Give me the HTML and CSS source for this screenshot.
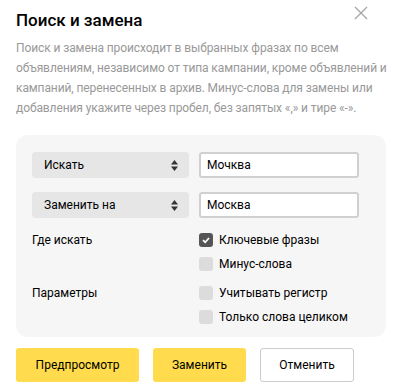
FILE: index.html
```html
<!DOCTYPE html>
<html lang="ru">
<head>
<meta charset="utf-8">
<link rel="stylesheet" href="styles.css">
</head>
<body>
<div class="dialog">
  <div class="head">
    <h1 class="title">Поиск и замена</h1>
    <button class="close" aria-label="Закрыть">
      <svg width="14" height="14" viewBox="0 0 14 14"><path d="M1 1L13 13M13 1L1 13" stroke="#a6a6a6" stroke-width="1.3" fill="none"/></svg>
    </button>
  </div>
  <p class="desc">Поиск и замена происходит в выбранных фразах по всем объявлениям, независимо от типа кампании, кроме объявлений и кампаний, перенесенных в архив. Минус-слова для замены или добавления укажите через пробел, без запятых «,» и тире «-».</p>
  <div class="panel">
    <div class="row">
      <div class="select"><span>Искать</span><svg class="arr" width="7" height="11" viewBox="0 0 7 11"><path d="M3.5 0L7 4.5H0Z M3.5 11L0 6.5H7Z" fill="#333"/></svg></div>
      <div class="input">Мочква</div>
    </div>
    <div class="row">
      <div class="select"><span>Заменить на</span><svg class="arr" width="7" height="11" viewBox="0 0 7 11"><path d="M3.5 0L7 4.5H0Z M3.5 11L0 6.5H7Z" fill="#333"/></svg></div>
      <div class="input">Москва</div>
    </div>
    <div class="group">
      <div class="label">Где искать</div>
      <div class="opts">
        <div class="opt"><span class="cb on"><svg width="10" height="10" viewBox="0 0 10 10"><path d="M2 5.2L4.2 7.3L8 3" stroke="#fff" stroke-width="1.8" fill="none"/></svg></span>Ключевые фразы</div>
        <div class="opt"><span class="cb"></span>Минус-слова</div>
      </div>
    </div>
    <div class="group g2">
      <div class="label">Параметры</div>
      <div class="opts">
        <div class="opt"><span class="cb"></span>Учитывать регистр</div>
        <div class="opt"><span class="cb"></span>Только слова целиком</div>
      </div>
    </div>
  </div>
  <div class="buttons">
    <button class="btn yellow b1">Предпросмотр</button>
    <button class="btn yellow b2">Заменить</button>
    <button class="btn plain b3">Отменить</button>
  </div>
</div>
</body>
</html>
```
FILE: styles.css
```css
* { box-sizing: border-box; }
html, body { margin: 0; background: #fff; }
body {
  font-family: Roboto, "Noto Sans", sans-serif;
  font-size: 12px;
  color: #000;
}
.dialog { padding: 8px 12px 0 16px; width: 398px; }
.head { display: flex; justify-content: space-between; align-items: flex-start; }
.title {
  margin: 0;
  font-size: 17px;
  line-height: 24px;
  font-weight: 500;
  color: #000;
}
.close {
  border: 0; background: none; padding: 0; margin: -2px 18px 0 0;
  width: 14px; height: 14px; display: block;
}
.close svg { display: block; }
.desc {
  margin: 6px -8px 0 0;
  color: #999;
  font-size: 12px;
  line-height: 20px;
  letter-spacing: -0.1px;
}
.panel {
  margin-top: 17px;
  width: 370px;
  background: #f6f6f6;
  border-radius: 12px;
  padding: 17px 27px 12px 16px;
}
.row { display: flex; align-items: center; gap: 10px; height: 26px; margin-bottom: 14px; }
.select {
  width: 157px; height: 26px; flex: none;
  background: #e6e6e6;
  border-radius: 4px;
  display: flex; align-items: center; justify-content: space-between;
  padding: 0 11px 0 12px;
}
.arr { display: block; }
.input {
  flex: 1; height: 26px;
  border: 2px solid #d0d0d0;
  border-radius: 3px;
  background: #fff;
  padding: 0 6px;
  display: flex; align-items: center;
}
.group { display: flex; }
.group .label { width: 167px; flex: none; line-height: 16px; }
.g2 { margin-top: 13px; }
.opts { display: flex; flex-direction: column; gap: 8px; }
.opt { display: flex; align-items: center; line-height: 16px; height: 16px; white-space: nowrap; }
.cb {
  width: 14px; height: 14px; border-radius: 3px; flex: none;
  background: #dcdcdc; margin-right: 6px;
  display: flex; align-items: center; justify-content: center;
}
.cb.on { background: #555; }
.cb svg { display: block; }
.buttons { display: flex; gap: 14px; margin-top: 11px; }
.btn {
  font: inherit; font-size: 12px; color: #000;
  height: 34px; border-radius: 3px; padding: 0;
}
.yellow { background: #ffdb4d; border: 0; }
.plain { background: #fff; border: 1px solid #ccc; }
.b1 { width: 123px; }
.b2 { width: 93px; }
.b3 { width: 94px; }
```
